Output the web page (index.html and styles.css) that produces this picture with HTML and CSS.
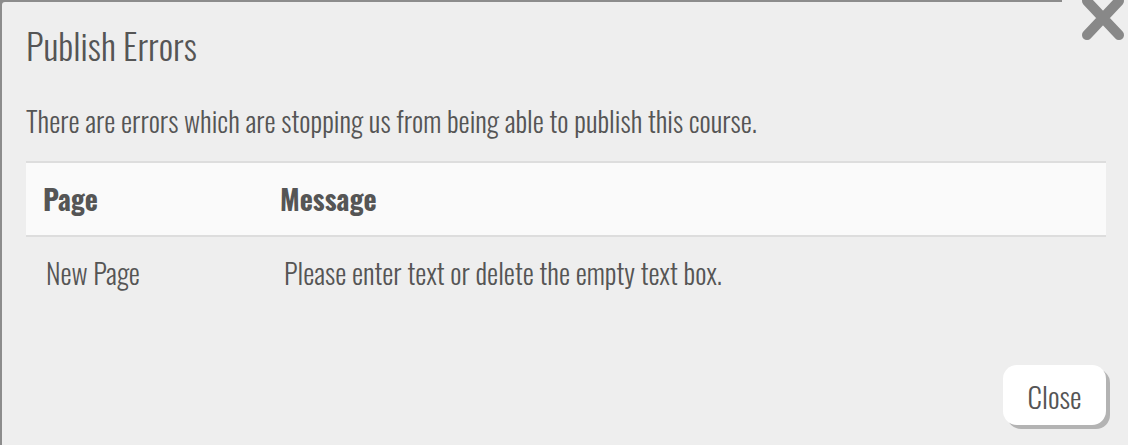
FILE: index.html
```html
<!DOCTYPE html>
<html lang="en">
<head>
    <meta charset="UTF-8">
    <meta name="viewport" content="width=device-width, initial-scale=1.0">
    <title>Publish Errors</title>
    <link rel="stylesheet" href="styles.css">
</head>
<body>
    <div class="dialog">
        <div class="dialog-title">Publish Errors</div>
        <p class="dialog-intro">There are errors which are stopping us from being able to publish this course.</p>
        <table class="error-table">
            <thead>
                <tr>
                    <th class="col-page">Page</th>
                    <th>Message</th>
                </tr>
            </thead>
            <tbody>
                <tr>
                    <td class="col-page">New Page</td>
                    <td>Please enter text or delete the empty text box.</td>
                </tr>
            </tbody>
        </table>
        <div class="dialog-footer">
            <button class="close-btn">Close</button>
        </div>
    </div>
    <div class="dialog-x" title="Close">
        <svg width="44" height="42" viewBox="0 0 44 42">
            <path d="M6 2 L38 36 M38 2 L6 36" stroke="#888" stroke-width="10" stroke-linecap="round" fill="none"/>
        </svg>
    </div>
</body>
</html>
```
FILE: styles.css
```css
body {
    margin: 0;
    height: 100vh;
    overflow: hidden;
    background-color: #8c8c8c;
    font-family: Oswald, "Open Sans", sans-serif;
    font-weight: 300;
    color: #555;
}
.dialog {
    margin: 2px 0 0 2px;
    height: calc(100vh - 2px);
    box-sizing: border-box;
    background-color: #eeeeee;
    border-top-left-radius: 3px;
    padding: 21px 22px 0 24px;
}
.dialog-title {
    font-size: 36px;
    line-height: 44px;
}
.dialog-intro {
    margin: 37px 0 0;
    font-size: 28px;
    line-height: 34px;
}
.error-table {
    margin-top: 23px;
    width: 100%;
    table-layout: fixed;
    border-collapse: collapse;
    font-size: 28px;
    line-height: 34px;
}
.error-table th {
    text-align: left;
    font-weight: 700;
    background-color: #fafafa;
    border-top: 2px solid #dddddd;
    border-bottom: 2px solid #dddddd;
    padding: 19px 17px;
}
.error-table td {
    padding: 19px 21px;
}
.error-table th.col-page {
    width: 203px;
}
.error-table td.col-page {
    padding-left: 20px;
}
.dialog-footer {
    display: flex;
    justify-content: flex-end;
    margin-top: 56px;
}
.close-btn {
    font-family: inherit;
    font-weight: 300;
    font-size: 29px;
    color: #555;
    background-color: #ffffff;
    border: none;
    border-radius: 14px;
    width: 103px;
    height: 60px;
    box-shadow: 4px 4px 0 #b3b3b3;
}
.dialog-x {
    position: absolute;
    top: 0;
    right: 0;
    width: 66px;
    height: 42px;
    background-color: #eeeeee;
    display: flex;
    justify-content: flex-end;
}
.dialog-x svg {
    margin-top: -1px;
    margin-right: 3px;
}
```
